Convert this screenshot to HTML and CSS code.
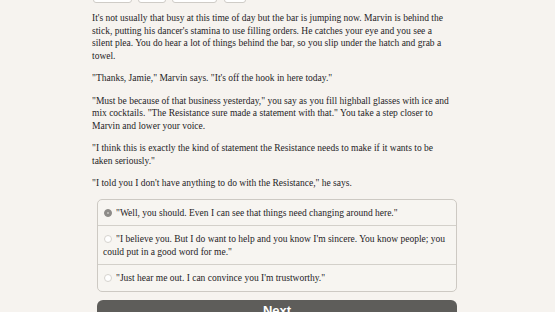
FILE: index.html
```html
<!DOCTYPE html>
<html>
<head>
<meta charset="utf-8">
<link rel="stylesheet" href="styles.css">
</head>
<body>
<div class="page">
  <div class="tabs">
    <button class="tab t1">Show Stats</button>
    <button class="tab t2">Restart</button>
    <button class="tab t3">Achievements</button>
    <button class="tab t4">Menu</button>
  </div>
  <div class="story">
    <p>It's not usually that busy at this time of day but the bar is jumping now. Marvin is behind the stick, putting his dancer's stamina to use filling orders. He catches your eye and you see a<br>silent plea. You do hear a lot of things behind the bar, so you slip under the hatch and grab a<br>towel.</p>
    <p>"Thanks, Jamie," Marvin says. "It's off the hook in here today."</p>
    <p>"Must be because of that business yesterday," you say as you fill highball glasses with ice and mix cocktails. "The Resistance sure made a statement with that." You take a step closer to<br>Marvin and lower your voice.</p>
    <p>"I think this is exactly the kind of statement the Resistance needs to make if it wants to be taken seriously."</p>
    <p>"I told you I don't have anything to do with the Resistance," he says.</p>
  </div>
  <div class="choices">
    <label class="choice"><span class="radio on"></span>"Well, you should. Even I can see that things need changing around here."</label>
    <label class="choice"><span class="radio"></span>"I believe you. But I do want to help and you know I'm sincere. You know people; you could put in a good word for me."</label>
    <label class="choice"><span class="radio"></span>"Just hear me out. I can convince you I'm trustworthy."</label>
  </div>
  <div class="next">Next</div>
</div>
</body>
</html>
```
FILE: styles.css
```css
html, body {
  margin: 0;
  padding: 0;
  background: #f6f3ef;
  height: 312px;
  overflow: hidden;
}
.page {
  width: 365px;
  margin-left: 92px;
  font-family: "Liberation Serif", "Times New Roman", serif;
  font-size: 9.5px;
  color: #25231f;
}
.tabs {
  display: flex;
  gap: 6px;
  margin-top: -9px;
  height: 12px;
}
.tab {
  height: 12px;
  padding: 0;
  border: 1px solid #cfccc7;
  border-radius: 3px;
  background: #ffffff;
  font-family: "Liberation Sans", Arial, sans-serif;
  font-size: 6px;
  color: #555;
  overflow: hidden;
  white-space: nowrap;
}
.t1 { width: 39px; margin-left: 1px; }
.t2 { width: 28px; }
.t3 { width: 45px; }
.t4 { width: 22px; margin-left: 1px; }
.story {
  margin-top: 9px;
  width: 358px;
}
.story p {
  margin: 0 0 9.5px 0;
  line-height: 12.7px;
}
.choices {
  margin: 0 0 0 5px;
  width: 358px;
  border: 1px solid #cdc9c3;
  border-radius: 5px;
  background: #f7f5f1;
  display: flex;
  flex-direction: column;
}
.choice {
  display: block;
  padding: 6.5px 6px 6px 5px;
  line-height: 12.7px;
  border-top: 1px solid #d3d0ca;
}
.choice:first-child {
  border-top: none;
}
.radio {
  display: inline-block;
  width: 8px;
  height: 8px;
  border-radius: 50%;
  border: 1px solid #d6d3ce;
  background: #ffffff;
  margin: 0 4px 0 1px;
  vertical-align: -1px;
  box-sizing: border-box;
  position: relative;
}
.radio.on {
  background: #8d8b88;
  border-color: #8d8b88;
}
.radio.on::after {
  content: "";
  position: absolute;
  left: 2px;
  top: 2px;
  width: 2px;
  height: 2px;
  border-radius: 50%;
  background: #c9c6c2;
}
.next {
  margin: 8px 0 0 5px;
  width: 360px;
  border-radius: 6px;
  background: #5e5d5a;
  color: #ffffff;
  font-family: "Liberation Sans", Arial, sans-serif;
  font-weight: bold;
  font-size: 13px;
  line-height: 14px;
  padding: 4px 0 12px 0;
  text-align: center;
}
```
